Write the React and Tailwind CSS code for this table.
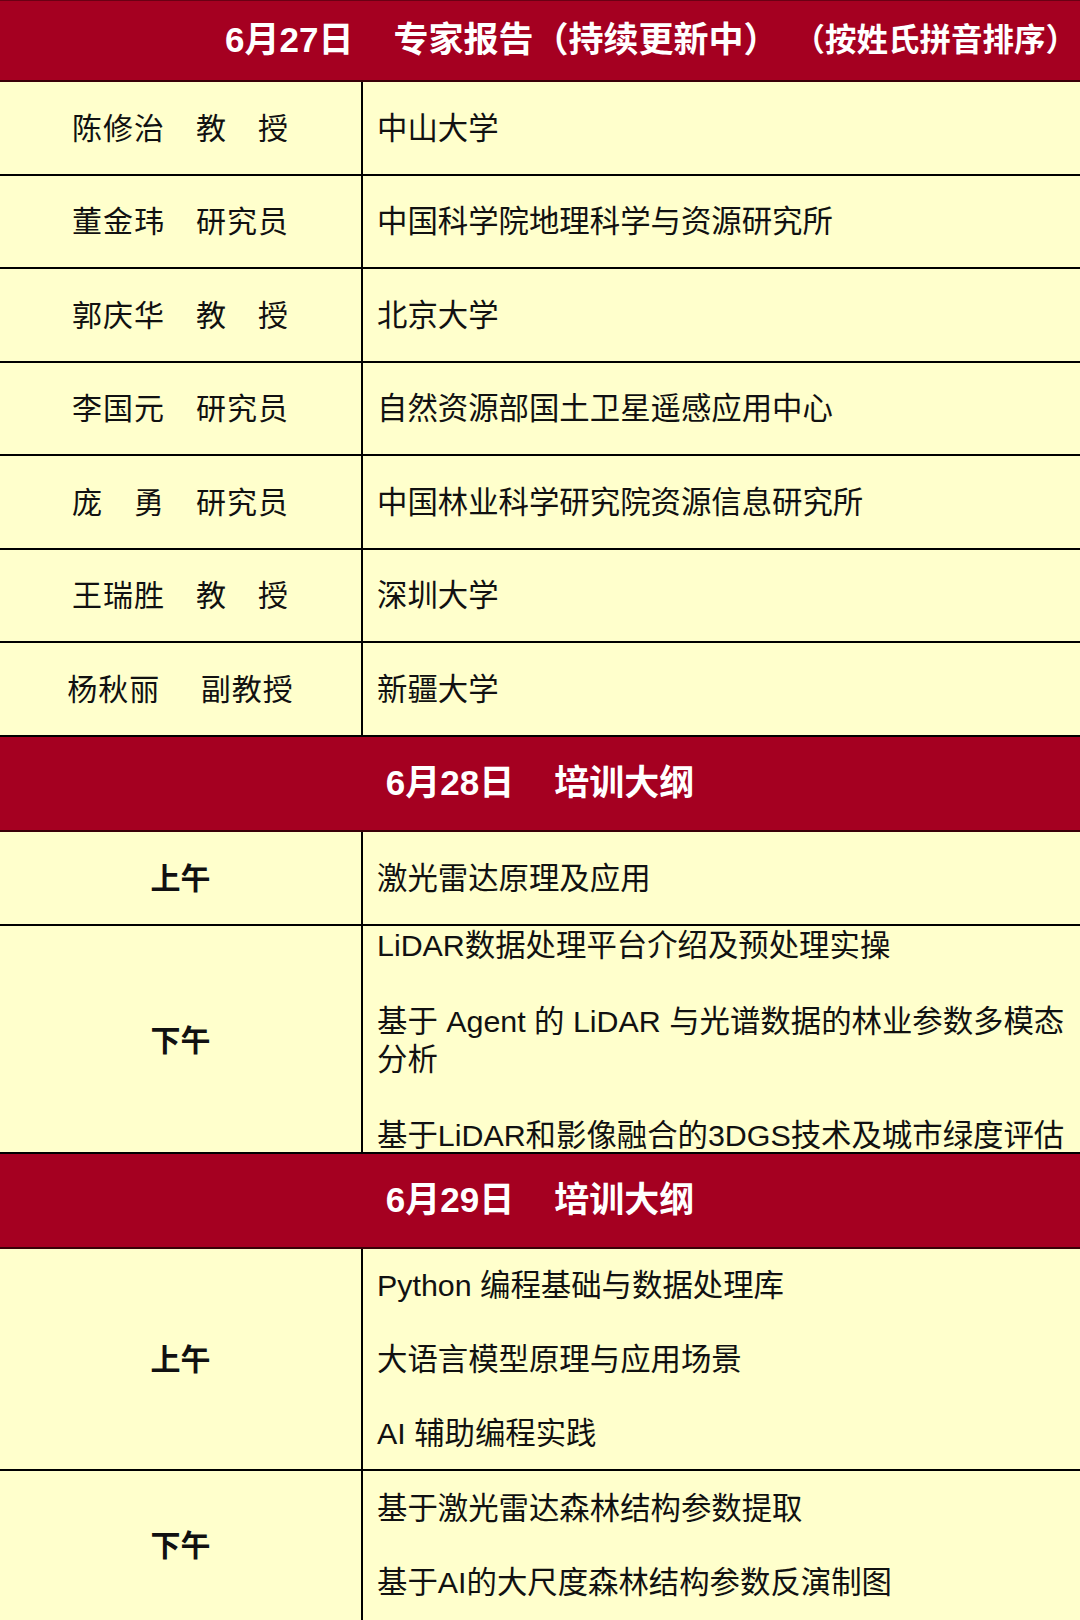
import React from 'react';

const experts = [
    { name: '陈修治　教　授', org: '中山大学', h: 'h-[94px]' },
    { name: '董金玮　研究员', org: '中国科学院地理科学与资源研究所', h: 'h-[93px]' },
    { name: '郭庆华　教　授', org: '北京大学', h: 'h-[94px]' },
    { name: '李国元　研究员', org: '自然资源部国土卫星遥感应用中心', h: 'h-[93px]' },
    { name: '庞　勇　研究员', org: '中国林业科学研究院资源信息研究所', h: 'h-[94px]' },
    { name: '王瑞胜　教　授', org: '深圳大学', h: 'h-[93px]' },
    { name: '杨秋丽　 副教授', org: '新疆大学', h: 'h-[94px]' },
];

// 一行：左侧标签 + 右侧内容
function Row({ label, bold, h, leading = 'leading-[37px]', last, children }) {
    return (
        <div
            className={`grid grid-cols-[363px_1fr] ${h} ${last ? '' : 'border-b-2 border-black'}`}
        >
            <div
                className={`flex items-center justify-center border-r-2 border-black whitespace-pre text-[30px] ${bold ? 'font-bold' : 'tracking-[1px]'}`}
            >
                {label}
            </div>
            <div className={`flex flex-col justify-center pl-[14px] text-[30.4px] ${leading} whitespace-nowrap`}>
                {children}
            </div>
        </div>
    );
}

function DayHeader({ date, title }) {
    return (
        <div className="h-[95px] flex items-center justify-center bg-[#a50021] border-b-2 border-[#3a0008] text-white font-bold text-[35px]">
            <span>{date}</span>
            <span className="ml-[40px]">{title}</span>
        </div>
    );
}

const Blank = () => <div>&nbsp;</div>;

export default function App() {
    return (
        <div className="w-[1080px] h-[1620px] overflow-hidden bg-[#ffffcc] text-[#111] font-['Liberation_Sans','Noto_Sans_CJK_SC',sans-serif]">
            <div className="h-[82px] flex items-center pl-[225px] bg-[#a50021] border-t border-[#6a0014] border-b-2 border-b-[#3a0008] text-white font-bold text-[35px] whitespace-nowrap">
                <span>6月27日</span>
                <span className="ml-[40px]">专家报告（持续更新中）</span>
                <span className="ml-[15px] text-[31.5px]">（按姓氏拼音排序）</span>
            </div>

            {experts.map((e) => (
                <Row key={e.name} label={e.name} h={e.h}>
                    <div>{e.org}</div>
                </Row>
            ))}

            <DayHeader date="6月28日" title="培训大纲" />
            <Row label="上午" bold h="h-[94px]">
                <div>激光雷达原理及应用</div>
            </Row>
            <Row label="下午" bold h="h-[228px]" leading="leading-[38px]">
                <div>LiDAR数据处理平台介绍及预处理实操</div>
                <Blank />
                <div>基于 Agent 的 LiDAR 与光谱数据的林业参数多模态</div>
                <div>分析</div>
                <Blank />
                <div>基于LiDAR和影像融合的3DGS技术及城市绿度评估</div>
            </Row>

            <DayHeader date="6月29日" title="培训大纲" />
            <Row label="上午" bold h="h-[222px]">
                <div>Python 编程基础与数据处理库</div>
                <Blank />
                <div>大语言模型原理与应用场景</div>
                <Blank />
                <div>AI 辅助编程实践</div>
            </Row>
            <Row label="下午" bold h="h-[149px]" last>
                <div>基于激光雷达森林结构参数提取</div>
                <Blank />
                <div>基于AI的大尺度森林结构参数反演制图</div>
            </Row>
        </div>
    );
}
